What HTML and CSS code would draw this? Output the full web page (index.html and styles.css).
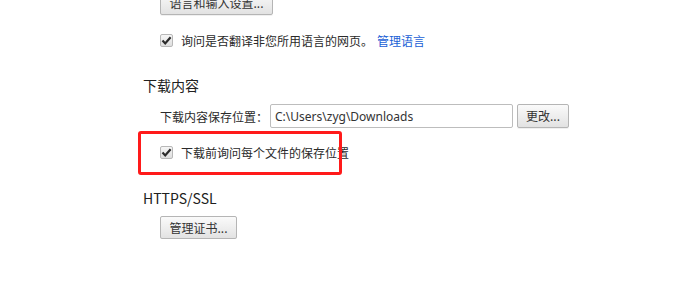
FILE: index.html
```html
<!DOCTYPE html>
<html lang="zh-CN">
	<head>
		<meta charset="UTF-8">
		<title>设置</title>
		<link rel="stylesheet" href="styles.css">
	</head>
	<body>
		<div class="settings">
			<div class="row btnRowTop">
				<button class="btn btnLang">语言和输入设置...</button>
			</div>
			<div class="row checkRow checkRowLang">
				<span class="check"><svg width="11" height="11" viewBox="0 0 11 11"><path d="M1.5 5.6 L4.2 8.4 L9.6 2.2" fill="none" stroke="#2b2b2b" stroke-width="2.2"/></svg></span>
				<span class="label">询问是否翻译非您所用语言的网页。</span>
				<a class="link" href="#">管理语言</a>
			</div>

			<h3 class="sectionHeader headerDownload">下载内容</h3>
			<div class="row pathRow">
				<span class="label">下载内容保存位置：</span>
				<input class="pathInput" type="text" value="C:\Users\zyg\Downloads">
				<button class="btn btnChange">更改...</button>
			</div>
			<div class="row checkRow checkRowAsk">
				<span class="check"><svg width="11" height="11" viewBox="0 0 11 11"><path d="M1.5 5.6 L4.2 8.4 L9.6 2.2" fill="none" stroke="#2b2b2b" stroke-width="2.2"/></svg></span>
				<span class="label">下载前询问每个文件的保存位置</span>
				<div class="mark"></div>
			</div>

			<h3 class="sectionHeader headerSsl">HTTPS/SSL</h3>
			<div class="row btnRowCert">
				<button class="btn btnCert">管理证书...</button>
			</div>
		</div>
	</body>
</html>
```

FILE: styles.css
```css
html, body {
	margin: 0;
	background: #fff;
}
body {
	font-family: "Noto Sans CJK SC", "Open Sans", sans-serif;
	font-size: 12px;
	color: #2a2a2a;
	overflow: hidden;
	text-spacing-trim: space-all;
}
.settings {
	padding-left: 143px;
	width: 533px;
}
.row {
	display: flex;
	align-items: center;
	margin-left: 17px;
	position: relative;
}
.btn {
	font-family: "Noto Sans CJK SC", "Open Sans", sans-serif;
	font-size: 12px;
	color: #333;
	height: 24px;
	padding: 0;
	white-space: nowrap;
	border: 1px solid #b5b5b5;
	border-radius: 2px;
	background: linear-gradient(#fafafa, #ececec 60%, #e2e2e2);
	box-shadow: 0 1px 0 rgba(0, 0, 0, 0.06);
	line-height: 20px;
}
.btnRowTop {
	margin-top: -9px;
	height: 24px;
}
.btnLang {
	width: 113px;
}
.checkRow {
	height: 20px;
}
.checkRowLang {
	margin-top: 15px;
}
.check {
	width: 11px;
	height: 11px;
	border: 1px solid #b8b8b8;
	border-radius: 2px;
	background: linear-gradient(#f6f6f6, #dedede);
	display: flex;
	align-items: center;
	justify-content: center;
	margin-right: 8px;
}
.label {
	white-space: nowrap;
}
.link {
	color: #1a5fd6;
	text-decoration: none;
	margin-left: 4px;
}
.sectionHeader {
	font-size: 14px;
	font-weight: normal;
	color: #202020;
	margin: 0;
	height: 20px;
	line-height: 20px;
}
.headerDownload {
	margin-top: 25px;
}
.pathRow {
	margin-top: 9px;
	height: 24px;
}
.pathInput {
	box-sizing: border-box;
	width: 243px;
	height: 24px;
	margin-left: 2px;
	padding: 0 4px;
	border: 1px solid #bdbdbd;
	border-radius: 2px;
	font-family: "Noto Sans", "Open Sans", sans-serif;
	font-size: 12px;
	color: #333;
	outline: none;
}
.btnChange {
	margin-left: 4px;
	width: 52px;
}
.checkRowAsk {
	margin-top: 14px;
}
.mark {
	position: absolute;
	left: -22px;
	top: -11px;
	width: 198px;
	height: 38px;
	border: 3px solid #ff1a1a;
	border-radius: 3px;
}
.headerSsl {
	margin-top: 26px;
}
.btnRowCert {
	margin-top: 8px;
}
.btnCert {
	width: 77px;
	height: 23px;
}
```
